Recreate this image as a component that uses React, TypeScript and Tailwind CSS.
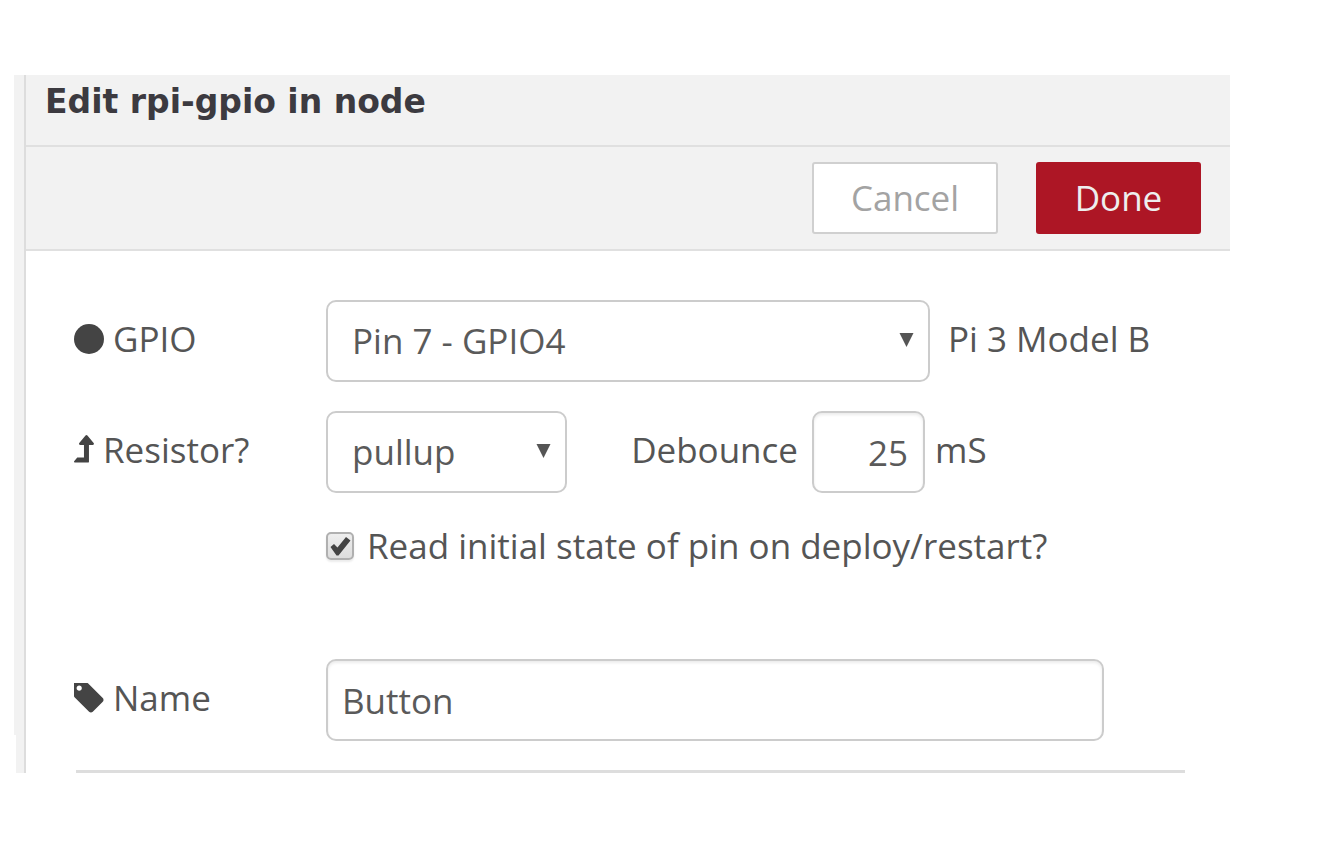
import type { ReactNode } from "react";

const fieldClass =
  "h-[82px] rounded-[10px] border-2 border-[#ccc] bg-white text-[#5a5a5a] outline-none focus:border-[#999]";
const insetClass = "shadow-[inset_0_2px_3px_rgba(0,0,0,0.08)]";

function CircleIcon() {
  return (
    <svg className="h-[30px] w-[30px] shrink-0" viewBox="0 0 30 30" fill="#444" aria-hidden="true">
      <circle cx="15" cy="15" r="15" />
    </svg>
  );
}

function LevelUpIcon() {
  return (
    <svg className="h-[30px] w-5 shrink-0" viewBox="0 57 1027 1541" fill="#444" aria-hidden="true">
      <path d="M1018 531q-17 37-58 37h-192v864q0 14-9 23t-23 9h-704q-21 0-29-18-8-20 4-35l160-192q9-11 25-11h320v-640h-192q-40 0-58-37-17-37 9-68l320-384q18-22 49-22t49 22l320 384q27 32 9 68z" />
    </svg>
  );
}

function TagIcon() {
  return (
    <svg className="h-[30px] w-[30px] shrink-0" viewBox="0 192 1475 1475" fill="#444" aria-hidden="true">
      <path d="M384 448q0-53-37.5-90.5t-90.5-37.5-90.5 37.5-37.5 90.5 37.5 90.5 90.5 37.5 90.5-37.5 37.5-90.5zm1067 576q0 53-37 90l-491 492q-39 37-91 37-53 0-90-37l-715-716q-38-37-64.5-101t-26.5-117v-416q0-52 38-90t90-38h416q53 0 117 26.5t102 64.5l715 714q37 39 37 91z" />
    </svg>
  );
}

function FieldLabel({ htmlFor, icon, children }: { htmlFor: string; icon: ReactNode; children: ReactNode }) {
  return (
    <label htmlFor={htmlFor} className="flex w-[252px] shrink-0 items-center gap-[9px] pb-1">
      {icon}
      {children}
    </label>
  );
}

function SelectField({ id, options, className }: { id: string; options: string[]; className: string }) {
  return (
    <div className={`relative ${className}`}>
      <select id={id} className={`${fieldClass} w-full appearance-none pr-12 pl-6`}>
        {options.map((option) => (
          <option key={option}>{option}</option>
        ))}
      </select>
      <svg
        className="pointer-events-none absolute top-8 right-4 h-[15px] w-[15px]"
        viewBox="0 0 15 15"
        fill="#555"
        aria-hidden="true"
      >
        <path d="M0.5 1H14.5L7.5 15Z" />
      </svg>
    </div>
  );
}

export default function App() {
  return (
    <main className="bg-white pt-[75px] pr-[98px] pl-[14px] font-['Open_Sans',sans-serif] text-[35px] leading-[48px] text-[#555]">
      <div className="flex">
        <div className="flex w-[10px] shrink-0 flex-col">
          <div className="flex-1 bg-[#f2f2f2]" />
          <div className="ml-0.5 h-[38px] bg-[#f2f2f2]" />
        </div>
        <section className="min-w-0 flex-1 border-l-2 border-[#ddd]">
          <header className="border-b-2 border-[#e0e0e0] bg-[#f2f2f2] pt-[3px] pb-[19px] pl-[19px]">
            <h1 className="font-['DejaVu_Sans',sans-serif] text-[33px] font-bold text-[#3c3a40]">
              Edit rpi-gpio in node
            </h1>
          </header>
          <div className="flex justify-end gap-[38px] border-b-2 border-[#e0e0e0] bg-[#f2f2f2] pt-[15px] pr-[29px] pb-[15px]">
            <button
              type="button"
              className="h-[72px] w-[186px] rounded-[3px] border-2 border-[#d0d0d0] bg-white text-[#a3a3a3]"
            >
              Cancel
            </button>
            <button type="button" className="h-[72px] w-[165px] rounded-[3px] bg-[#ad1625] text-[#eee]">
              Done
            </button>
          </div>
          <form className="pt-[49px] pr-[45px] pl-12">
            <div className="flex items-center">
              <FieldLabel htmlFor="gpio-pin" icon={<CircleIcon />}>
                GPIO
              </FieldLabel>
              <SelectField id="gpio-pin" className="w-[604px]" options={["Pin 7 - GPIO4"]} />
              <span className="pb-1 pl-[18px] whitespace-nowrap">Pi 3 Model B</span>
            </div>
            <div className="mt-[29px] flex items-center">
              <FieldLabel htmlFor="resistor" icon={<LevelUpIcon />}>
                Resistor?
              </FieldLabel>
              <SelectField id="resistor" className="w-[241px]" options={["pullup", "pulldown", "none"]} />
              <label htmlFor="debounce" className="w-[245px] pr-[14px] pb-1 text-right">
                Debounce
              </label>
              <input
                id="debounce"
                type="text"
                defaultValue="25"
                className={`${fieldClass} ${insetClass} w-[113px] pr-[15px] text-right`}
              />
              <span className="pb-1 pl-[10px]">mS</span>
            </div>
            <div className="mt-[29px] flex items-center gap-[13px] pl-[252px]">
              <span className="relative h-7 w-7 shrink-0">
                <input
                  id="read-initial"
                  type="checkbox"
                  defaultChecked
                  className="peer block h-7 w-7 appearance-none rounded-[5px] border-2 border-[#b0b0b0] bg-linear-to-b from-[#eee] to-[#ddd] shadow-[0_2px_2px_rgba(0,0,0,0.08)]"
                />
                <svg
                  className="pointer-events-none invisible absolute inset-0 h-7 w-7 peer-checked:visible"
                  viewBox="0 0 28 28"
                  fill="#444"
                  aria-hidden="true"
                >
                  <path d="M4.5 15L8 12L11.5 15.5L20 5L24.5 8.5L12.5 23.5H10.5Z" />
                </svg>
              </span>
              <label htmlFor="read-initial">Read initial state of pin on deploy/restart?</label>
            </div>
            <div className="mt-[89px] flex items-center pr-[81px]">
              <FieldLabel htmlFor="node-name" icon={<TagIcon />}>
                Name
              </FieldLabel>
              <input
                id="node-name"
                type="text"
                defaultValue="Button"
                className={`${fieldClass} ${insetClass} min-w-0 flex-1 px-[14px]`}
              />
            </div>
            <hr className="mt-[29px] ml-0.5 border-t-3 border-[#ddd]" />
          </form>
        </section>
      </div>
    </main>
  );
}
